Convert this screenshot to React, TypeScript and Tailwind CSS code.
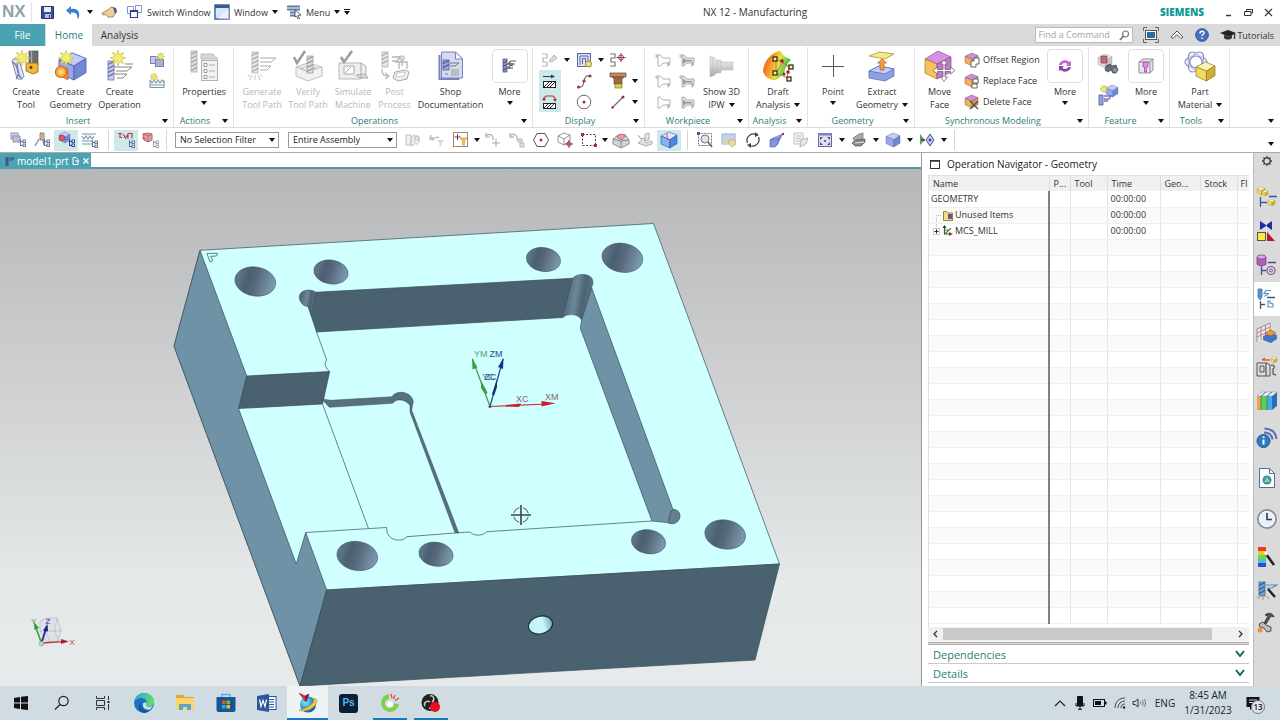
import React from "react";
import type { ReactNode } from "react";

/* ---------- drawing helpers ---------- */

function S({ w, h, children }: { w: number; h: number; children: ReactNode }) {
  return (
    <svg width={w} height={h} viewBox={`0 0 ${w} ${h}`} fill="none" aria-hidden="true" className="shrink-0">
      {children}
    </svg>
  );
}

function Caret() {
  return (
    <S w={6} h={4}>
      <path d="M0 0h6L3 4z" fill="#111" />
    </S>
  );
}

function Star({ x, y, r }: { x: number; y: number; r: number }) {
  const pts: string[] = [];
  for (let i = 0; i < 16; i++) {
    const a = (Math.PI * i) / 8 - Math.PI / 2;
    const q = i % 2 === 0 ? r : r * 0.48;
    pts.push(`${(x + q * Math.cos(a)).toFixed(2)},${(y + q * Math.sin(a)).toFixed(2)}`);
  }
  return <polygon points={pts.join(" ")} fill="#f3ef6c" stroke="#c4b95a" strokeWidth="0.6" />;
}

function Cube({ x, y, s, top, left, right, line }: { x: number; y: number; s: number; top: string; left: string; right: string; line: string }) {
  return (
    <g transform={`translate(${x} ${y}) scale(${s / 10})`} stroke={line} strokeWidth="0.35" strokeLinejoin="round">
      <path d="M0 2.5 5 0l5 2-4.500 2.800z" fill={top} />
      <path d="M0 2.500 5.500 4.800V10L0 7.500z" fill={left} />
      <path d="M5.500 4.800 10 2v5.300L5.500 10z" fill={right} />
    </g>
  );
}
const blue = { top: "#c3cdf6", left: "#98a8ea", right: "#7387d6", line: "#5b69b0" };
const gold = { top: "#fbf3b0", left: "#f0d95e", right: "#d1ad35", line: "#8d7526" };
const face = { top: "#cf8ddb", left: "#f3b04c", right: "#e2993a", line: "#7d4c7e" };
const grey = { top: "#f2f2f2", left: "#dcdcdc", right: "#c6c6c6", line: "#a5a5a5" };

function Mill({ x, y, h, c, d }: { x: number; y: number; h: number; c: string; d: string }) {
  const n = Math.floor(h / 4);
  return (
    <g>
      <rect x={x} y={y} width="6" height={h} fill={c} stroke={d} strokeWidth="0.7" />
      {Array.from({ length: n }, (_, i) => (
        <path key={i} d={`M${x} ${y + i * 4 + 3.500}l6-3`} stroke={d} strokeWidth="1.300" />
      ))}
    </g>
  );
}

function Tree({ x, y, c = "#5a6694" }: { x: number; y: number; c?: string }) {
  return (
    <g stroke={c} strokeWidth="0.900" fill="#fff">
      <path d={`M${x + 0.500} ${y}v7M${x} ${y + 2.500}h3M${x} ${y + 6.500}h3`} />
      <rect x={x + 3} y={y + 1} width="2.500" height="2.500" />
      <rect x={x + 3} y={y + 5} width="2.500" height="2.500" />
    </g>
  );
}

/* ---------- big ribbon icons ---------- */

const CreateToolIcon = () => (
  <S w={30} h={32}>
    <rect x="18" y="1" width="9" height="14" fill="#6d6d6d" stroke="#444" strokeWidth="0.600" />
    <path d="M20.500 1v13" stroke="#aaa" strokeWidth="1.500" />
    <path d="M15 13h12v9l-5 2-7-3z" fill="#efb734" stroke="#8b6416" strokeWidth="0.800" />
    <circle cx="20" cy="17.500" r="1.400" fill="#4c3a10" />
    <path d="M1 11c0-2 6-3 7-1l5 16c-1 4-6 4-7 2z" fill="#dfe3f3" stroke="#68719b" strokeWidth="0.800" />
    <path d="M1 12c8 3 3 11 10 17M8 11c-6 7 4 9-3 18" stroke="#7480b0" strokeWidth="1.400" />
    <Star x={11} y={8} r={8} />
  </S>
);
const CreateGeometryIcon = () => (
  <S w={32} h={32}>
    <Cube x={4} y={3} s={27} {...blue} />
    <path d="M6 16l7 3v11l-8-4z" fill="#f08a3c" stroke="#b5541e" strokeWidth="0.600" />
    <circle cx="6" cy="22" r="5.500" fill="#f9b23c" stroke="#d36a22" strokeWidth="1.200" />
    <circle cx="6" cy="22" r="2.500" fill="#fcd774" />
    <Star x={11} y={8} r={8} />
  </S>
);
const CreateOperationIcon = () => (
  <S w={30} h={32}>
    <path d="M8 17h19l-5 4H11M20 14h8M10 24h12l-4 4h-6" stroke="#777" strokeWidth="0.900" />
    <Mill x={3} y={11} h={19} c="#c9cdea" d="#5c66a0" />
    <Star x={13} y={8} r={8} />
  </S>
);
const PropertiesIcon = () => (
  <S w={30} h={32}>
    <Mill x={2} y={1} h={21} c="#ddd" d="#a5a5a5" />
    <path d="M12 4h12l5 5H12z" fill="#d8d8d8" stroke="#aaa" strokeWidth="0.700" />
    <rect x="12.500" y="10.500" width="16" height="20" fill="#f2f2f2" stroke="#b0b0b0" />
    <path d="M15 13.500h3v3h-3zM15 19.500h3v3h-3zM15 25.500h3v3h-3z" fill="#fff" stroke="#888" strokeWidth="0.800" />
    <path d="M20 15h6M20 21h6M20 27h6" stroke="#aaa" strokeWidth="1.200" />
  </S>
);
const GenerateIcon = () => (
  <S w={30} h={32}>
    <Mill x={5} y={2} h={21} c="#e8e8e8" d="#a8a8a8" />
    <path d="M13 8h16l-5 4H13M13 16h11l-4 4h-7" stroke="#aaa" strokeWidth="1" />
    <path d="M8 25v5M3 24l-2 3M13 24l2 3M5 25l-2 5M11 25l2 5" stroke="#c9c9c9" strokeWidth="1" />
  </S>
);
const VerifyIcon = () => (
  <S w={30} h={32}>
    <path d="M3 17l12-4 14 4v9l-14 5-12-5z" fill="#f1f1f1" stroke="#c0c0c0" />
    <path d="M3 17l12 5 14-5M8 18l7-2 8 2-8 3z" fill="#ddd" stroke="#b8b8b8" strokeWidth="0.700" />
    <Mill x={14} y={6} h={17} c="#ddd" d="#999" />
    <path d="M1 7l3 6L12 1" stroke="#9b9b9b" strokeWidth="2.500" />
  </S>
);
const SimulateIcon = () => (
  <S w={32} h={32}>
    <path d="M2 13h22l5 3v10l-6 3H2z" fill="#eee" stroke="#b5b5b5" />
    <path d="M7 16h10v8H7z" fill="#fff" stroke="#aaa" />
    <path d="M8 23l6-6M24 13v16M19 25l4 3h8l-3-4z" fill="#ddd" stroke="#aaa" />
    <path d="M4 7l3 5 8-11" stroke="#9b9b9b" strokeWidth="2.500" />
  </S>
);
const PostIcon = () => (
  <S w={30} h={32}>
    <Mill x={2} y={2} h={15} c="#e6e6e6" d="#a8a8a8" />
    <path d="M12 7h8l-3 4h-5M22 8v8M15 12h12v7M19 12v7" stroke="#b5b5b5" strokeWidth="1.300" />
    <path d="M20 6h4v4h-4z" fill="#ddd" stroke="#aaa" strokeWidth="0.700" />
    <path d="M15 22l10-2 4 2-2 7-9 2-5-3z" fill="#eee" stroke="#aaa" />
    <path d="M17 23l8-1-1 4-8 1z" fill="#fff" stroke="#bbb" strokeWidth="0.700" />
    <path d="M2 19c0 6 2 7 6 7m-3-3 4 3-4 3" stroke="#b3b3b3" strokeWidth="1.200" />
  </S>
);
const ShopIcon = () => (
  <S w={28} h={32}>
    <path d="M4.500 2h14l7 7v19h-21z" fill="#d5d9f4" stroke="#7a82bd" />
    <path d="M2.500 5v24h20" stroke="#7a82bd" strokeWidth="2" />
    <path d="M18.500 2v7h7z" fill="#fff" stroke="#7a82bd" />
    <Mill x={6} y={10} h={10} c="#9ea6dd" d="#4a5390" />
    <path d="M13 13h9l-4 3h-5M8 24h3" stroke="#777" />
    <path d="M14 19h8v7h-8z" fill="#bbb" />
  </S>
);
const MoreMillIcon = () => (
  <S w={18} h={16}>
    <rect x="2" y="1" width="4" height="13" fill="#8d95c9" stroke="#3e4781" strokeWidth="0.700" />
    <path d="M2 5l4-2M2 8.500l4-2M2 12l4-2" stroke="#3e4781" />
    <path d="M15 3h-5L7 6h5M12 7.500h-3L7 10h3" stroke="#555" strokeWidth="1.100" />
    <path d="M7 6h7M7 10h5" stroke="#555" strokeWidth="1.100" />
  </S>
);
const ShowIpwIcon = () => (
  <S w={28} h={24}>
    <defs>
      <linearGradient id="ipw" x1="0" y1="0" x2="0" y2="1">
        <stop offset="0" stopColor="#e9e9e9" />
        <stop offset="0.400" stopColor="#dadada" />
        <stop offset="1" stopColor="#a5a5a5" />
      </linearGradient>
    </defs>
    <path d="M2 2c3 1 5 2 6 4h5v2h12v8H13v3H9c-2 2-4 3-7 4z" fill="url(#ipw)" stroke="#c0c0c0" strokeWidth="0.600" />
    <path d="M5 3v18M9 6v13M13 7v11" stroke="#bbb" strokeWidth="0.600" />
  </S>
);
const DraftIcon = () => (
  <S w={32} h={32}>
    <defs>
      <linearGradient id="drf" x1="0" y1="0.300" x2="1" y2="0.600">
        <stop offset="0" stopColor="#f0501f" />
        <stop offset="0.300" stopColor="#f79a28" />
        <stop offset="0.550" stopColor="#e6e33a" />
        <stop offset="0.850" stopColor="#43cc4c" />
      </linearGradient>
    </defs>
    <path d="M1 20C3 10 9 3 17 1c3 0 3 3 5 5 2 2 5 2 7 4-4 3-5 7-7 13-4 4-7 8-11 7C5 29 1 24 1 20z" fill="url(#drf)" />
    <path d="M14 9l6 3 10 6M14 9v14l12 5M14 23l7-11M20 12l7 6-2 10" stroke="#cf6b6b" strokeWidth="1" />
    <g fill="#fff27a" stroke="#222" strokeWidth="1.200">
      <rect x="11" y="7" width="4" height="4" />
      <rect x="11" y="21" width="4" height="4" />
      <rect x="27" y="15" width="4" height="4" />
      <rect x="25" y="27" width="4" height="4" />
    </g>
    <g fill="#a02020">
      <circle cx="20" cy="11" r="1.800" />
      <circle cx="26" cy="22" r="1.800" />
      <circle cx="22" cy="24" r="1.600" />
    </g>
  </S>
);
const PointIcon = () => (
  <S w={24} h={24}>
    <path d="M12.500 1v22M1 12.500h22" stroke="#555" strokeWidth="1" />
  </S>
);
const ExtractIcon = () => (
  <S w={28} h={32}>
    <path d="M1 6 11 2l15 2-9 5z" fill="#f6e88a" stroke="#b5a84e" />
    <path d="M1 21l10-5 15 3v7l-9 5-16-3z" fill="#8f9fe8" stroke="#5563ad" strokeWidth="0.700" />
    <path d="M1 21l10-5 15 3-9 5z" fill="#c2cdf8" stroke="#5563ad" strokeWidth="0.700" />
    <path d="M12 20v-7H9.500L14 9l4.500 4H16v7z" fill="#f39a45" stroke="#b35f1a" strokeWidth="0.700" />
  </S>
);
const MoveFaceIcon = () => (
  <S w={32} h={32}>
    <path d="M1 9 14 1l13 6-14 7z" fill="#d793e2" stroke="#8b4a97" strokeWidth="0.700" />
    <path d="M1 9l12 5v15L1 23z" fill="#f7c257" stroke="#a9722b" strokeWidth="0.700" />
    <path d="M13 14l14-7v15l-14 7z" fill="#c079cf" stroke="#8b4a97" strokeWidth="0.700" />
    <path d="M20 10l3.500 4H21v5.500h5.500V17l4.500 3.500-4.500 3.500v-2.500H21V27h2.500L20 31.500 16.500 27H19v-5.500h-5.500V24L9 20.500l4.500-3.500v2.500H19V14h-2.500z" fill="#fff" stroke="#666" strokeWidth="0.800" />
  </S>
);
const SyncMoreIcon = () => (
  <S w={16} h={16}>
    <path d="M2 7c1-5 8-6 10-3l2-1v5H9l1.500-1.500C9 4 5 5 5 7z" fill="#c069cf" />
    <path d="M14 9c-1 5-8 6-10 3l-2 1V8h5L5.500 9.500C7 12 11 11 11 9z" fill="#9441a6" />
  </S>
);
const FeatureMoreIcon = () => (
  <S w={18} h={18}>
    <path d="M2 5l4-3h10v11l-3 3H2z" fill="#e8e8e8" stroke="#777" strokeWidth="0.800" />
    <path d="M2 5h11v11M13 5l3-3" stroke="#777" strokeWidth="0.800" />
    <path d="M6 5h5v5H9.500v5h-2v-5H6z" fill="#e58be8" stroke="#9d3ea3" strokeWidth="0.700" />
  </S>
);
const MaterialIcon = () => (
  <S w={32} h={32}>
    <g stroke="#8a95c6" strokeWidth="1.100" fill="#e9ecf8">
      <ellipse cx="12" cy="12" rx="11" ry="6" />
      <ellipse cx="12" cy="12" rx="11" ry="6" transform="rotate(60 12 12)" fillOpacity="0.500" />
      <ellipse cx="12" cy="12" rx="11" ry="6" transform="rotate(120 12 12)" fillOpacity="0.500" />
      <circle cx="12" cy="12" r="6" fill="#fff" />
    </g>
    <Cube x={12} y={12} s={19} {...gold} />
  </S>
);

/* ---------- small ribbon icons ---------- */

const NewProgramIcon = () => (
  <S w={16} h={16}>
    <rect x="1.500" y="4.500" width="8" height="7" fill="#c4c8e2" stroke="#7880ab" />
    <rect x="6.500" y="7.500" width="8" height="7" fill="#aab0d6" stroke="#7880ab" />
    <Star x={11.500} y={4.500} r={4} />
  </S>
);
const NewMethodIcon = () => (
  <S w={16} h={16}>
    <path d="M1 7l2 3 2-3 2 3 2-3 2 3 2-3 2 3M1 14.500h14M1 12h14" stroke="#7894a8" strokeWidth="1.100" />
    <path d="M1 7v8M15 7v8" stroke="#7894a8" />
    <Star x={5} y={4} r={4} />
  </S>
);
const PathGreyIcon = () => (
  <S w={18} h={16}>
    <path d="M1 2h5v4H2v4h4v4H1" stroke="#b5b5b5" strokeWidth="1.200" />
    <path d="M8 9l5-6 3 3-5 4z" fill="#d9d9d9" stroke="#b5b5b5" />
  </S>
);
const DisplayGridIcon = () => (
  <S w={17} h={16}>
    <rect x="1.500" y="1.500" width="13" height="13" fill="#dfe2f5" stroke="#5d66a8" />
    <path d="M4 13V4h8v8M6.500 12V6.500H9.500V10" stroke="#5d66a8" />
    <circle cx="12.500" cy="12" r="3" fill="#f3e27a" stroke="#9a8a30" />
  </S>
);
const PathPointIcon = () => (
  <S w={18} h={16}>
    <path d="M1 2h5v4H2v4h4v4H1" stroke="#777" strokeWidth="1.200" />
    <circle cx="12" cy="5.500" r="2.500" stroke="#9d3b4a" />
    <path d="M12 1v9M7.500 5.500h9" stroke="#9d3b4a" />
  </S>
);
const HatchArrowIcon = () => (
  <S w={16} h={16}>
    <path d="M1 3.500h10" stroke="#27436e" strokeWidth="1.100" />
    <path d="M9 1.500l4 2-4 2z" fill="#27436e" />
    <rect x="1.500" y="8.500" width="12" height="6" fill="#fff" stroke="#222" />
    <path d="M2 14l5-5M5 14l5-5M8 14l5-5" stroke="#222" strokeWidth="1" />
  </S>
);
const HatchLoopIcon = () => (
  <S w={16} h={16}>
    <path d="M2 7V4l2-2h7l2 2v3" stroke="#b03a3a" strokeWidth="1.100" />
    <path d="M0 6h4L2 3zM11 5h4l-2 3z" fill="#b03a3a" />
    <rect x="1.500" y="9.500" width="12" height="5" fill="#fff" stroke="#222" />
    <path d="M2 14l4-4M5 14l4-4M8 14l4-4" stroke="#222" strokeWidth="1" />
  </S>
);
const SplineIcon = () => (
  <S w={16} h={16}>
    <path d="M2 14c6 1 5-3 6-6s1-6 6-5" stroke="#666" strokeWidth="1.100" />
    <circle cx="2.500" cy="14" r="1.600" fill="#a0323c" />
    <circle cx="8" cy="8" r="1.600" fill="#a0323c" />
    <circle cx="14" cy="3" r="1.600" fill="#a0323c" />
  </S>
);
const HolderIcon = () => (
  <S w={18} h={17}>
    <path d="M1 1h16v4H1z" fill="#c08a62" stroke="#6e4528" strokeWidth="0.700" />
    <path d="M3 5h12l-2 2v5H5V7z" fill="#9a6a48" stroke="#6e4528" strokeWidth="0.700" />
    <path d="M6 12h7v4H6z" fill="#d9d44c" stroke="#7f7b20" strokeWidth="0.700" />
  </S>
);
const CirclePointIcon = () => (
  <S w={16} h={16}>
    <circle cx="8" cy="8" r="6.800" stroke="#666" strokeWidth="1" />
    <circle cx="8" cy="8" r="1.500" fill="#a0323c" />
  </S>
);
const LineIcon = () => (
  <S w={16} h={16}>
    <path d="M2 14 13 3" stroke="#666" strokeWidth="1.100" />
    <circle cx="13" cy="3" r="1.500" fill="#a0323c" />
    <circle cx="2.500" cy="13.500" r="1.200" fill="#a0323c" />
  </S>
);
function IpwSmall({ fill, star }: { fill: string; star: boolean }) {
  return (
    <S w={18} h={16}>
      {star && <path d="M1 4h4M3 2v4" stroke="#aaa" strokeWidth="0.900" />}
      <path d="M4 3h2l3 3h7v5H9l-3 3H4z" fill={fill} stroke="#b0b0b0" />
      {fill !== "#fff" && <path d="M5 6l3 2h6v1.500H8L5 12z" fill="#9a9a9a" />}
      <path d="M13.500 10v5l3-3z" fill="#aaa" />
    </S>
  );
}
function FaceIcon({ kind }: { kind: "offset" | "replace" | "delete" }) {
  return (
    <S w={16} h={16}>
      <Cube x={1} y={1} s={13} {...face} />
      {kind === "offset" && <path d="M7 9h3V6h5v6h-3v3H7z" fill="#fff" stroke="#666" />}
      {kind === "replace" && <path d="M9 6h5v4H9zM8 15v-4h5v4z" fill="#fff" stroke="#666" />}
      {kind === "delete" && <path d="M6 7l8 8M14 7l-8 8" stroke="#555" strokeWidth="1.400" />}
    </S>
  );
}
const FindFeatureIcon = () => (
  <S w={22} h={22}>
    <Cube x={1} y={1} s={14} {...grey} />
    <path d="M4 3h6v7H4z" fill="#c76a72" stroke="#7d3a40" strokeWidth="0.700" />
    <path d="M9 13l4-2 2 2 4-1 2 5-2 3h-3l-2-3-3 2-3-2z" fill="#666b78" stroke="#444" strokeWidth="0.700" />
    <circle cx="18" cy="17" r="2" fill="#7d8fc9" />
  </S>
);
const TeachIcon = () => (
  <S w={22} h={22}>
    <Cube x={9} y={1} s={12} {...blue} />
    <Star x={7} y={5} r={4} />
    <path d="M2 11h4v10H2z" fill="#9ba4d3" stroke="#5563ad" strokeWidth="0.900" />
    <path d="M7 12h7l-2 3H7M7 17h4" stroke="#6a76b5" strokeWidth="1.300" />
  </S>
);

/* ---------- selection bar icons ---------- */

function Sel({ children }: { children: ReactNode }) {
  return <S w={18} h={18}>{children}</S>;
}
const ProgramView = () => <Sel><rect x="2" y="2" width="7" height="6" fill="#ccd0e4" stroke="#8f95b2" /><rect x="4" y="5" width="7" height="6" fill="#b9bed9" stroke="#8f95b2" /><Tree x={11} y={8} /></Sel>;
const ToolView = () => <Sel><path d="M7 2h4v7H7z" fill="#d9b08a" stroke="#777" strokeWidth="0.800" /><path d="M6 8l-4 7M10 9l1 5" stroke="#8089ac" strokeWidth="1.400" /><Tree x={11} y={8} /></Sel>;
const GeometryView = () => <Sel><Cube x={2} y={1} s={11} {...blue} /><circle cx="5" cy="7" r="2.800" fill="#e25a54" stroke="#933" strokeWidth="0.700" /><Tree x={12} y={8} c="#22348c" /></Sel>;
const MethodView = () => <Sel><path d="M1 3h14M1 5l2 3 2-3 2 3 2-3 2 3 2-3M1 10h10M1 13h10" stroke="#7894a8" strokeWidth="1.100" /><Tree x={11} y={9} /></Sel>;
const FeatView = () => <Sel><path d="M1 2.500h4M3 2.500v4h2M6 3l2.500 4L11 3v5M12 2.500h3v5" stroke="#b0404a" strokeWidth="1.200" /><Tree x={12} y={9} /></Sel>;
const FeatGroup = () => <Sel><path d="M2 3l4-1 5 1v6l-4 2-4-2z" fill="#e3a3a8" stroke="#b0525a" strokeWidth="0.900" /><path d="M2 3l5 2 4-2M7 5v6M1 7l4 1" stroke="#b0525a" strokeWidth="0.900" /><Tree x={12} y={9} c="#999" /></Sel>;
const GreyParts = () => <Sel><path d="M2 4h5v10H2zM7 6l4-2v9l-4 2zM12 5c5-1 4 9 0 8" stroke="#c0c0c0" fill="#f0f0f0" /><circle cx="13" cy="7" r="2" stroke="#c0c0c0" /></Sel>;
const GreyFilter = () => <Sel><path d="M2 6c4 4 7-2 9 1M3 4l-1 4 4 1" stroke="#bdbdbd" strokeWidth="1.400" /><path d="M9 9h7l-2.500 3v3h-2v-3z" fill="#d8d8d8" /></Sel>;
const FilterPoint = () => <Sel><rect x="1.500" y="1.500" width="14" height="14" fill="#fff" stroke="#a9826a" /><path d="M5.500 3v6M2.500 6h6" stroke="#6a3a3a" /><path d="M8 7h7l-2.500 3v4h-2v-4z" fill="#f3c04e" stroke="#b98a2a" strokeWidth="0.500" /></Sel>;
const GreyRotate = () => <Sel><path d="M2 5c4-4 8 0 7 4M2 2v4h4" stroke="#b0b0b0" strokeWidth="1.200" /><path d="M12 8v8M8 12h8" stroke="#a5a5a5" /></Sel>;
const GreyChain = () => <Sel><path d="M2 5c4-4 8 0 7 4M2 2v4h4" stroke="#bbb" strokeWidth="1.300" /><path d="M10 8h4v3h-4zM12 12h4v4h-4z" fill="#e2e2e2" stroke="#b5b5b5" /></Sel>;
const HexPoint = () => <Sel><path d="M5 2.500h8l3.500 6.500-3.500 6.500H5L1.500 9z" stroke="#555" strokeWidth="1" /><circle cx="9" cy="9" r="1.500" fill="#a0323c" /></Sel>;
const CubePoint = () => <Sel><path d="M2 5l6-3 6 2v6l-6 4-6-3zM2 5l6 3 6-4M8 8v6" stroke="#888" strokeWidth="0.900" /><path d="M13 9v8M9 13h8" stroke="#a0323c" /><circle cx="13" cy="13" r="2" stroke="#a0323c" /></Sel>;
const RectSelect = () => <Sel><rect x="2.500" y="3.500" width="13" height="11" stroke="#444" strokeDasharray="2 1.500" /><path d="M1 2h3v3H1zM14 13h3v3h-3z" fill="#a0323c" /></Sel>;
const FaceSolid = () => <Sel><path d="M1 8l5-4 8 1 3 4v4l-8 4-8-4z" fill="#d0d4dc" stroke="#777" strokeWidth="0.800" /><path d="M5 6l3-3 6 1-4 5z" fill="#e8a0a6" stroke="#ad5b66" strokeWidth="0.800" /><path d="M9 10v6M1 8l8 2 8-1" stroke="#777" strokeWidth="0.800" /></Sel>;
const GreySheet = () => <Sel><path d="M2 4l3 4 3-1 2 5 6-2v3l-6 2-8-3 4-3zM9 3v7l4-1V2z" fill="#e2e2e2" stroke="#b0b0b0" /></Sel>;
const ClipCube = () => <Sel><Cube x={1} y={1} s={16} top="#d7eaff" left="#7fb5f2" right="#4a86de" line="#2a4d9c" /><path d="M7 2v6l4 2" stroke="#d24a7c" /></Sel>;
const FitView = () => <Sel><rect x="2.500" y="2.500" width="13" height="12" stroke="#777" strokeDasharray="2 1" /><circle cx="9" cy="8" r="4" stroke="#777" fill="#dbe6f5" /><path d="M12 11l4 5" stroke="#666" strokeWidth="1.600" /><path d="M1 1h3v3H1z" fill="#3b5aa0" /></Sel>;
const PanImg = () => <Sel><rect x="2" y="3" width="13" height="10" fill="#c6d4ea" stroke="#9fb0c8" /><path d="M2 13l5-5 3 3 2-2 3 3v1z" fill="#dcd3a8" /><path d="M9 9h6v5l-3 2-3-3z" fill="#f2dba4" stroke="#b39a5c" strokeWidth="0.600" /></Sel>;
const RotateView = () => <Sel><path d="M3.500 12A6.500 6.500 0 0 1 12 3.500M14.500 6A6.500 6.500 0 0 1 6 14.500" stroke="#444" strokeWidth="1.300" /><path d="M11 1l4 3-4 2zM7 12l-4 2 4 3z" fill="#444" /></Sel>;
const Section = () => <Sel><path d="M2 9l8-2v6l-3 3H2z" fill="#8494e0" stroke="#5b68b0" strokeWidth="0.700" /><path d="M2 9l3-2 10-4-5 4z" fill="#b5c0f3" stroke="#5b68b0" strokeWidth="0.700" /><path d="M10 7l5-4-5 10z" fill="#6a7ed8" /><circle cx="15" cy="3" r="1.200" fill="#a0323c" /></Sel>;
const GreyList = () => <Sel><path d="M2 2h9v11H2zM4 5h5M4 7.500h5M4 10h5" stroke="#c0c0c0" fill="#f2f2f2" /><path d="M9 9l7-2-2 6-6 3z" fill="#e8e8e8" stroke="#b5b5b5" /></Sel>;
const FitWindow = () => <Sel><rect x="2.500" y="2.500" width="13" height="13" fill="#d9e2f5" stroke="#5b68b0" /><path d="M2 2h14v2.500H2z" fill="#7686c5" /><path d="M4 6h3L4 9zM14 6h-3l3 3zM4 14h3l-3-3zM14 14h-3l3-3z" fill="#a0323c" /><rect x="8" y="9" width="2" height="2" fill="#5b68b0" /></Sel>;
const Plate = () => <Sel><path d="M3 7l6-4 4-1v6l-8 3z" fill="#aaa" stroke="#666" strokeWidth="0.700" /><path d="M2 12l4-3 9-1v3l-4 4H5z" fill="#888" stroke="#555" strokeWidth="0.700" /><path d="M5 12l9-1" stroke="#eee" /></Sel>;
const ShadeCube = () => <Sel><Cube x={2} y={2} s={14} {...blue} /></Sel>;
const WcsIcon = () => <Sel><path d="M2 3l5 6-5 5z" fill="#4fa862" /><path d="M3 9h4" stroke="#a0323c" strokeWidth="1.800" /><path d="M12 3l4 6-4 6-4-6z" fill="#c3cbf3" stroke="#444f96" /><circle cx="12" cy="9" r="1.500" fill="#444f96" /></Sel>;

/* ---------- ribbon parts ---------- */

function Big({ icon, lines, w, caret, inline, disabled, boxed }: { icon: ReactNode; lines: string[]; w: string; caret?: boolean; inline?: boolean; disabled?: boolean; boxed?: boolean }) {
  return (
    <button type="button" disabled={disabled} className={`${w} flex shrink-0 flex-col items-center whitespace-nowrap ${disabled ? "text-[#b9b9b9]" : "text-[#333]"}`}>
      <span className={`flex h-[34px] items-center justify-center ${boxed ? "w-[36px] rounded-sm border border-[#ddd]" : ""}`}>{icon}</span>
      <span className="mt-[2px] flex flex-col items-center leading-[13px]">
        {lines.map((l, i) => (
          <span key={l} className="flex items-center gap-1">
            {l}
            {inline && i === lines.length - 1 && <Caret />}
          </span>
        ))}
      </span>
      {caret && <span className="flex h-[10px] items-center"><Caret /></span>}
    </button>
  );
}

function Group({ name, w, children }: { name: string; w: string; children: ReactNode }) {
  return (
    <section aria-label={name} className={`${w} flex shrink-0 flex-col border-r border-[#e3e3e3] pt-[2px]`}>
      <div className="flex h-[66px]">{children}</div>
      <footer className="flex h-[13px] items-center text-[#2b7d79]">
        <span className="flex-1 whitespace-nowrap text-center">{name}</span>
        <button type="button" aria-label={`${name} options`} className="flex w-[17px] justify-center"><Caret /></button>
      </footer>
    </section>
  );
}

function Tiny({ icon, label, caret, active }: { icon: ReactNode; label: string; caret?: boolean; active?: boolean }) {
  return (
    <button type="button" aria-label={label} className="flex h-[21px] items-center">
      <span className={`flex h-full w-[22px] items-center justify-center ${active ? "bg-[#cfe9eb]" : ""}`}>{icon}</span>
      <span className="flex w-3 justify-center">{caret && <Caret />}</span>
    </button>
  );
}

function SelBtn({ icon, label, active }: { icon: ReactNode; label: string; active?: boolean }) {
  return (
    <button type="button" aria-label={label} className={`flex h-[21px] w-6 shrink-0 items-center justify-center ${active ? "bg-[#cfe9eb]" : ""}`}>{icon}</button>
  );
}
function Sep({ w = "w-3" }: { w?: string }) {
  return <span className={`${w} flex h-5 shrink-0 justify-center`}><span className="w-px bg-[#d5d5d5]" /></span>;
}
function Drop({ label, w }: { label: string; w: string }) {
  return <button type="button" aria-label={label} className={`${w} flex shrink-0 justify-center`}><Caret /></button>;
}
function Pick({ label, value, options, w }: { label: string; value: string; options: string[]; w: string }) {
  return (
    <label className={`${w} relative flex h-4 shrink-0 items-center`}>
      <span className="sr-only">{label}</span>
      <select defaultValue={value} className="h-4 w-full appearance-none border border-[#999] bg-white py-0 pl-1 pr-3 text-[9px] leading-[14px] text-[#222] outline-none">
        {options.map((o) => <option key={o}>{o}</option>)}
      </select>
      <span className="pointer-events-none absolute right-1"><Caret /></span>
    </label>
  );
}

/* ---------- title and tabs ---------- */

function TitleBar() {
  return (
    <header className="flex h-6 items-center bg-white text-[#333]">
      <span className="w-[31px] pl-[2px] font-['Liberation_Sans',sans-serif] text-[17px] font-bold leading-6 text-[#8fa3a9]">NX</span>
      <span className="h-5 w-px bg-[#e3e3e3]" />
      <button type="button" aria-label="Save" className="flex w-[30px] justify-center">
        <S w={13} h={13}><path d="M0.500 0.500h12v12h-12z" fill="#3d4c8f" stroke="#27346d" /><path d="M3 1h7v5H3z" fill="#e9ecf6" /><path d="M4 8h6v4H4z" fill="#b7bfdd" /><path d="M8 9h1v3H8z" fill="#27346d" /></S>
      </button>
      <button type="button" aria-label="Undo" className="flex w-[22px] justify-center">
        <S w={14} h={14}><path d="M0 5.500 5 1v3c6-1 9 2 8 8l-2 2c1-5-1-7-6-6.500V10z" fill="#3f7ed0" /></S>
      </button>
      <Drop label="Undo list" w="w-3" />
      <button type="button" aria-label="Touch mode" className="flex w-[26px] justify-center">
        <S w={16} h={12}><path d="M1 7l6-3 3-3 3 1 2 4-3 5H7L5 8.500 2 9z" fill="#f0cf9a" stroke="#96703c" strokeWidth="0.800" /><path d="M12 1l3 1 1 4-2 2z" fill="#44548f" /></S>
      </button>
      <button type="button" className="ml-1 flex w-[88px] items-center gap-1">
        <S w={17} h={14}><path d="M1.500 1.500h6v7h-6zM9.500 0.500h6v7h-6z" fill="#fff" stroke="#8a96c5" /><path d="M4.500 5.500h7v7h-7z" fill="#fff" stroke="#2f3f8a" strokeWidth="1.200" /><path d="M4.500 6h7" stroke="#2f3f8a" strokeWidth="2" /></S>
        <span className="whitespace-nowrap">Switch Window</span>
      </button>
      <button type="button" className="flex items-center gap-1">
        <S w={16} h={16}><rect x="1" y="1" width="14" height="14" fill="#d5e6f8" stroke="#3a5a9c" strokeWidth="1.400" /><path d="M1 1h14v3H1z" fill="#3a5a9c" /><path d="M15 4v11H4z" fill="#fff" fillOpacity="0.500" /></S>
        <span>Window</span><Caret />
      </button>
      <button type="button" className="ml-2 flex items-center gap-1">
        <S w={16} h={14}><path d="M1 1.500h13M1 4.500h13M4 7.500h6M4 10.500h5" stroke="#5f7ba3" strokeWidth="2" /><path d="M9 5l6 5-3 .5 1.500 3-1.500.5-1.500-3L9 12z" fill="#fff" stroke="#222" strokeWidth="0.700" /></S>
        <span>Menu</span><Caret />
      </button>
      <button type="button" aria-label="Customize toolbar" className="ml-1"><S w={6} h={6}><path d="M0 .5h6" stroke="#111" /><path d="M0 2h6L3 6z" fill="#111" /></S></button>
      <h1 className="flex-1 whitespace-nowrap text-center text-[10px]">NX 12 - Manufacturing</h1>
      <span className="font-['Open_Sans',sans-serif] text-[10px] font-extrabold text-[#0d9a92]">SIEMENS</span>
      <div className="ml-[14px] flex">
        <button type="button" aria-label="Minimize" className="flex w-5 justify-center"><S w={9} h={9}><path d="M2 7.500h5" stroke="#333" strokeWidth="1.500" /></S></button>
        <button type="button" aria-label="Restore" className="flex w-5 justify-center"><S w={9} h={9}><path d="M2.500 3V1.500h6V5H7M.5 3.500H7v4H.5z" stroke="#333" /></S></button>
        <button type="button" aria-label="Close" className="mr-[2px] flex w-5 justify-center"><S w={9} h={9}><path d="M1 1l7 7M8 1 1 8" stroke="#333" strokeWidth="1.200" /></S></button>
      </div>
    </header>
  );
}

function TabRow() {
  return (
    <nav className="flex h-[22px] items-stretch bg-[#dadada] text-[10px] text-[#333]">
      <button type="button" className="w-[45px] bg-[#4ba3b2] text-white">File</button>
      <button type="button" className="ml-px w-[46px] bg-white pt-[1px] text-[#1c7f7c]">Home</button>
      <button type="button" className="w-[55px] pt-[1px]">Analysis</button>
      <div className="ml-auto flex items-center text-[9px]">
        <label className="flex h-4 w-[98px] items-center border border-[#bbb] bg-white px-[2px]">
          <span className="sr-only">Find a Command</span>
          <input placeholder="Find a Command" className="h-[14px] w-full min-w-0 bg-transparent p-0 leading-[14px] outline-none placeholder:text-[#a5a5a5]" />
          <S w={12} h={11}><circle cx="7.500" cy="4" r="3" stroke="#777" strokeWidth="1.200" /><path d="M5.500 6 2 10" stroke="#777" strokeWidth="1.800" /></S>
        </label>
        <button type="button" aria-label="Full screen" className="ml-[10px] flex"><S w={16} h={16}><path d="M.5 4V.5H4M12 .5h3.500V4M15.500 12v3.500H12M4 15.500H.5V12" stroke="#666" /><rect x="2.500" y="3.500" width="11" height="9" fill="#fff" stroke="#555" /><rect x="4" y="5" width="8" height="6" fill="#2c6aa6" /></S></button>
        <button type="button" aria-label="Minimize ribbon" className="ml-[11px] flex"><S w={14} h={12}><path d="M1 8l6-6 6 6-2 1.500L7 5.500 3 9.500z" fill="#fff" stroke="#555" /></S></button>
        <button type="button" aria-label="Help" className="ml-[11px] flex"><S w={14} h={14}><circle cx="7" cy="7" r="6.300" fill="#4472c4" stroke="#2c4f94" /><path d="M5 5.500c0-3 4-3 4-.5 0 1.500-2 1.500-2 3M7 9.500v1.500" stroke="#fff" strokeWidth="1.400" /></S></button>
        <button type="button" className="ml-[11px] mr-[6px] flex items-center gap-[1px]">
          <S w={16} h={12}><path d="M0 4l8-3 8 3-7 4z" fill="#222" /><path d="M4 6v3c2 2 6 2 8 0V6l-3 2z" fill="#333" /><path d="M14.500 4v6" stroke="#333a80" strokeWidth="1.500" /></S>
          <span>Tutorials</span>
        </button>
      </div>
    </nav>
  );
}

function Ribbon() {
  return (
    <div className="flex h-[82px] border-b border-[#dcdcdc] bg-white pt-px">
      <Group name="Insert" w="w-[174px]">
        <span className="w-[5px]" />
        <Big w="w-[42px]" icon={<CreateToolIcon />} lines={["Create", "Tool"]} />
        <Big w="w-[47px]" icon={<CreateGeometryIcon />} lines={["Create", "Geometry"]} />
        <Big w="w-[51px]" icon={<CreateOperationIcon />} lines={["Create", "Operation"]} />
        <div className="flex w-[23px] flex-col">
          <button type="button" aria-label="Create Program" className="flex h-[21px] items-center justify-center"><NewProgramIcon /></button>
          <button type="button" aria-label="Create Method" className="flex h-[21px] items-center justify-center"><NewMethodIcon /></button>
        </div>
      </Group>
      <Group name="Actions" w="w-[60px]">
        <Big w="w-[60px]" icon={<PropertiesIcon />} lines={["Properties"]} caret />
      </Group>
      <Group name="Operations" w="w-[299px]">
        <span className="w-[5px]" />
        <Big w="w-[46px]" icon={<GenerateIcon />} lines={["Generate", "Tool Path"]} disabled />
        <Big w="w-[46px]" icon={<VerifyIcon />} lines={["Verify", "Tool Path"]} disabled />
        <Big w="w-[44px]" icon={<SimulateIcon />} lines={["Simulate", "Machine"]} disabled />
        <Big w="w-[39px]" icon={<PostIcon />} lines={["Post", "Process"]} disabled />
        <Big w="w-[73px]" icon={<ShopIcon />} lines={["Shop", "Documentation"]} />
        <Big w="w-[45px]" icon={<MoreMillIcon />} lines={["More"]} caret boxed />
      </Group>
      <Group name="Display" w="w-[112px]">
        <div className="ml-[6px] grid grid-cols-3 content-start">
          <Tiny label="Display options" icon={<PathGreyIcon />} caret />
          <Tiny label="Show grid" icon={<DisplayGridIcon />} caret />
          <Tiny label="Show path points" icon={<PathPointIcon />} />
          <Tiny label="Show feed moves" icon={<HatchArrowIcon />} active />
          <Tiny label="Spline" icon={<SplineIcon />} />
          <Tiny label="Tool holder" icon={<HolderIcon />} caret />
          <Tiny label="Show non-cutting moves" icon={<HatchLoopIcon />} active />
          <Tiny label="Circle centre" icon={<CirclePointIcon />} />
          <Tiny label="Line" icon={<LineIcon />} caret />
        </div>
      </Group>
      <Group name="Workpiece" w="w-[104px]">
        <div className="ml-[6px] grid w-12 grid-cols-2 content-start">
          {[0, 1, 2].map((r) => (
            <React.Fragment key={r}>
              <button type="button" aria-label={`Blank view ${r + 1}`} className="flex h-[21px] items-center justify-center"><IpwSmall fill="#fff" star={r < 2} /></button>
              <button type="button" aria-label={`Part view ${r + 1}`} className="flex h-[21px] items-center justify-center"><IpwSmall fill="#ddd" star={r < 2} /></button>
            </React.Fragment>
          ))}
        </div>
        <Big w="w-[45px]" icon={<ShowIpwIcon />} lines={["Show 3D", "IPW"]} inline />
      </Group>
      <Group name="Analysis" w="w-[59px]">
        <Big w="w-[58px]" icon={<DraftIcon />} lines={["Draft", "Analysis"]} inline />
      </Group>
      <Group name="Geometry" w="w-[107px]">
        <Big w="w-[50px]" icon={<PointIcon />} lines={["Point"]} caret />
        <Big w="w-[48px]" icon={<ExtractIcon />} lines={["Extract", "Geometry"]} inline />
      </Group>
      <Group name="Synchronous Modeling" w="w-[174px]">
        <Big w="w-[49px]" icon={<MoveFaceIcon />} lines={["Move", "Face"]} />
        <div className="flex w-[78px] flex-col whitespace-nowrap text-[#333]">
          <button type="button" className="flex h-[21px] items-center gap-[3px]"><FaceIcon kind="offset" />Offset Region</button>
          <button type="button" className="flex h-[21px] items-center gap-[3px]"><FaceIcon kind="replace" />Replace Face</button>
          <button type="button" className="flex h-[21px] items-center gap-[3px]"><FaceIcon kind="delete" />Delete Face</button>
        </div>
        <Big w="w-[46px]" icon={<SyncMoreIcon />} lines={["More"]} caret boxed />
      </Group>
      <Group name="Feature" w="w-[81px]">
        <div className="flex w-[38px] flex-col items-center gap-[9px] pt-1">
          <button type="button" aria-label="Find feature"><FindFeatureIcon /></button>
          <button type="button" aria-label="Teach feature"><TeachIcon /></button>
        </div>
        <Big w="w-[38px]" icon={<FeatureMoreIcon />} lines={["More"]} caret boxed />
      </Group>
      <Group name="Tools" w="w-[60px]">
        <Big w="w-[60px]" icon={<MaterialIcon />} lines={["Part", "Material"]} inline />
      </Group>
      <div className="flex flex-1 items-end justify-end pb-1 pr-[5px]">
        <Drop label="Ribbon options" w="w-2" />
      </div>
    </div>
  );
}

function SelectionBar() {
  return (
    <div className="flex h-[25px] items-center border-b border-[#aaa] bg-white pl-[6px]">
      <SelBtn label="Program order view" icon={<ProgramView />} />
      <SelBtn label="Machine tool view" icon={<ToolView />} />
      <SelBtn label="Geometry view" icon={<GeometryView />} active />
      <SelBtn label="Method view" icon={<MethodView />} />
      <Sep />
      <SelBtn label="Feature view" icon={<FeatView />} active />
      <SelBtn label="Feature group view" icon={<FeatGroup />} />
      <Sep w="w-2" />
      <div className="ml-[5px] mr-1 flex gap-[9px]">
        <Pick label="Selection filter" value="No Selection Filter" options={["No Selection Filter", "Face", "Edge", "Body"]} w="w-[104px]" />
        <Pick label="Selection scope" value="Entire Assembly" options={["Entire Assembly", "Work Part Only"]} w="w-[109px]" />
      </div>
      <SelBtn label="Interpart link" icon={<GreyParts />} />
      <SelBtn label="Reset filter" icon={<GreyFilter />} />
      <SelBtn label="Snap filter" icon={<FilterPoint />} />
      <Drop label="Snap filter list" w="w-2" />
      <SelBtn label="Undo selection" icon={<GreyRotate />} />
      <SelBtn label="Chain selection" icon={<GreyChain />} />
      <SelBtn label="Polygon" icon={<HexPoint />} />
      <SelBtn label="Body point" icon={<CubePoint />} />
      <SelBtn label="Rectangle selection" icon={<RectSelect />} />
      <Drop label="Selection shapes" w="w-2" />
      <SelBtn label="Face selection" icon={<FaceSolid />} />
      <SelBtn label="Sheet selection" icon={<GreySheet />} />
      <SelBtn label="Shaded body" icon={<ClipCube />} active />
      <Sep />
      <SelBtn label="Fit" icon={<FitView />} />
      <SelBtn label="Pan" icon={<PanImg />} />
      <SelBtn label="Rotate" icon={<RotateView />} />
      <SelBtn label="Section" icon={<Section />} />
      <SelBtn label="Section list" icon={<GreyList />} />
      <SelBtn label="Zoom to window" icon={<FitWindow />} />
      <Drop label="Zoom options" w="w-[10px]" />
      <SelBtn label="Background" icon={<Plate />} />
      <Drop label="Background options" w="w-[10px]" />
      <SelBtn label="Rendering style" icon={<ShadeCube />} />
      <Drop label="Rendering options" w="w-[10px]" />
      <SelBtn label="Show WCS" icon={<WcsIcon />} />
      <Drop label="WCS options" w="w-[10px]" />
      <Sep w="w-[10px]" />
      <div className="ml-auto mt-2 pr-[5px]"><Drop label="Toolbar options" w="w-2" /></div>
    </div>
  );
}

/* ---------- model view ---------- */

const holes = [
  [255.300, 281.500, 20.500, 14.500],
  [331, 272, 17.200, 12],
  [543.500, 259.500, 17.200, 12],
  [622.400, 257.800, 20.500, 14.500],
  [357.300, 556, 20.500, 14.500],
  [436, 554.200, 17.200, 12],
  [648.500, 541.800, 17.200, 12],
  [725.200, 534.500, 20.500, 14.500],
];

function ModelView() {
  return (
    <svg className="block min-h-[517px] w-full flex-1" viewBox="0 169 921 517" preserveAspectRatio="xMinYMin slice" role="img" aria-label="model1.prt">
      <defs>
        <linearGradient id="bg" x1="0" y1="0" x2="0" y2="1">
          <stop offset="0" stopColor="#b5b7b8" />
          <stop offset="0.500" stopColor="#d3d5d6" />
          <stop offset="0.800" stopColor="#e5e9e9" />
          <stop offset="1" stopColor="#e6eaea" />
        </linearGradient>
        <linearGradient id="hole" x1="0" y1="0" x2="1" y2="0.100">
          <stop offset="0" stopColor="#657f90" />
          <stop offset="0.350" stopColor="#4a6070" />
          <stop offset="0.550" stopColor="#56697b" />
          <stop offset="1" stopColor="#7b99ae" />
        </linearGradient>
        <linearGradient id="cyl" x1="0" y1="0" x2="1" y2="0.250">
          <stop offset="0.150" stopColor="#4d6676" />
          <stop offset="0.500" stopColor="#6c8899" />
          <stop offset="0.750" stopColor="#4c6371" />
          <stop offset="1" stopColor="#5a7485" />
        </linearGradient>
        <linearGradient id="pin" x1="0" y1="0" x2="1" y2="0">
          <stop offset="0" stopColor="#bdf3f7" />
          <stop offset="0.600" stopColor="#c9f7fb" />
          <stop offset="1" stopColor="#7fa3b5" />
        </linearGradient>
      </defs>
      <rect x="0" y="169" width="921" height="517" fill="url(#bg)" />
      <g stroke="#3a4c55" strokeWidth="0.700" strokeLinejoin="round">
        <path d="M200 250.300 653.500 223.500 779.500 564 326.700 590 300 686 174 346z" fill="#cfffff" />
        <path d="M200 250.300 174 346 300 686 326.700 590 305.700 532.500 296.300 564 238.700 409 246.700 376z" fill="#6f92a7" />
        <path d="M326.700 590 779.500 564 755 660 300 686z" fill="#4a6270" />
        <path d="M246.700 376 329.700 371.500 322.500 404 238.700 408.500z" fill="#4a6270" />
        <path d="M315 292.300 573 278.300 562.500 317.500 316.500 332 308 306z" fill="#4a6270" />
        <path d="M299.300 297c0-7 11-9 16.500-4.700L311.500 315 308 306.500c-5 0-8.700-5-8.700-9.500z" fill="url(#cyl)" strokeWidth="0.500" />
        <path d="M572.500 278.500c4-6 21-6 20.500 4-.3 3-1 4-1.500 5.500L581.700 320c-4-6.500-14-7-18.900-2.500z" fill="url(#cyl)" strokeWidth="0.500" />
        <path d="M591.700 288 673 509.500c-4 3-3.500 8-5.500 13l-15.500-1.500L580.300 328.300l1.400-8.300z" fill="#6f92a7" />
        <path d="M673 509.500c6-.5 9 6 5.500 11-2 3-6 4-10.500 2.500 2-4 1-10 5-13.500z" fill="#657f90" />
        <path d="M321.700 399 330.700 400.300 392.300 396.700c2-6 18-7 21 4.500l-1.300 7-.3 2L458.700 532.700H455L410 412v-6.500c-4-6.500-14-7.500-17.300-2.200L329.300 407.300z" fill="#56707d" strokeWidth="0.500" />
        <path d="M316.500 332 326.700 360c-2.500 3-2.200 6 3 12M322.500 404 368.300 528" fill="none" />
        <path d="M305.700 532.500 386.700 527.500c-1 15 18 14.500 20 9.200L455 533M455 533l15-1c4 4.500 13 4 16.700-.3L652 521" fill="none" />
        <path d="M207 253.500 217.500 253.300 216.500 256 210.700 256.300 212.800 260.700 210 262z" fill="none" />
      </g>
      {holes.map(([x, y, rx, ry]) => (
        <ellipse key={x} cx={x} cy={y} rx={rx} ry={ry} transform={`rotate(9 ${x} ${y})`} fill="url(#hole)" stroke="#3a4c55" strokeWidth="0.500" />
      ))}
      <ellipse cx="540.500" cy="625" rx="12.300" ry="8.800" transform="rotate(-14 540.500 625)" fill="url(#pin)" stroke="#1f2d35" strokeWidth="1.200" />

      <g fontFamily="'Liberation Sans', Arial, sans-serif" fontSize="9">
        <path d="M490 406.500 472.500 359" stroke="#3f9a3f" strokeWidth="1.200" />
        <path d="M472 358l5.500 9.500-5 2zM481 380.500l6.500 12-2 2.500-4.500-7z" fill="#3aa040" />
        <path d="M490 406.500 503 359" stroke="#24408e" strokeWidth="1.200" />
        <path d="M503.500 358l-5.500 9 5 2zM497 379l-5 15 2 2 3-9z" fill="#14317e" />
        <path d="M490 406.500 548 404" stroke="#c2343a" strokeWidth="1.200" />
        <path d="M555.500 403.300 541.500 401v5.500zM521 403.500l-15 1.500v1.500l13 .5z" fill="#c8202c" />
        <circle cx="490" cy="406.500" r="1.500" fill="#555" />
        <text x="474" y="356.500" fill="#5d9a72">YM</text>
        <text x="489.500" y="357" fill="#2b4a86">ZM</text>
        <text x="482" y="379.500" fill="#4f8a80" fontSize="9">YC</text>
        <text x="484.500" y="379.500" fill="#2b4a86" fontSize="9">ZC</text>
        <text x="516" y="402" fill="#8a5f66">XC</text>
        <text x="545" y="400" fill="#8a5f66">XM</text>
      </g>

      <g stroke="#444" strokeWidth="1">
        <circle cx="521" cy="515" r="7.500" fill="none" strokeWidth="0.900" strokeDasharray="8 3.780" strokeDashoffset="-1.900" />
        <path d="M521 505v20M511 515h20" strokeWidth="1.600" />
      </g>

      <g fontFamily="'Liberation Sans', Arial, sans-serif" fontSize="8">
        <path d="M40 621l7-3h10l4 12-3 11-11 1-7-11zM40 631h21M47 618l-1 13 4 11M57 618l-2 12 3 11" fill="#dfe1e8" stroke="#b3b6bf" strokeWidth="0.700" />
        <path d="M41.500 643 35 625" stroke="#3f9a3f" strokeWidth="1.600" />
        <path d="M34 622l5 6-4.500 2z" fill="#2f9a35" />
        <path d="M41.500 643 46.500 627" stroke="#1a2f8a" strokeWidth="1.800" />
        <path d="M47.500 624l-4.500 6.500 5 1z" fill="#14207e" />
        <path d="M41.500 643 63 641.700" stroke="#b8343a" strokeWidth="1.300" />
        <path d="M69 641.500 61 639v5z" fill="#b8202c" />
        <circle cx="41.500" cy="643.500" r="2.300" fill="#bcd8c8" stroke="#78988a" strokeWidth="0.600" />
        <text x="31" y="624" fill="#3f9a3f">Y</text>
        <text x="45.500" y="624" fill="#24309a">Z</text>
        <text x="69.500" y="644.500" fill="#c0404a">X</text>
      </g>
    </svg>
  );
}

/* ---------- navigator ---------- */

const columns: [string, string][] = [
  ["Name", "w-[120px]"],
  ["P...", "w-[21px]"],
  ["Tool", "w-[37px]"],
  ["Time", "w-[53px]"],
  ["Geo...", "w-[40px]"],
  ["Stock", "w-[37px]"],
  ["Fl", ""],
];

const rows: { name: ReactNode; time: string }[] = [
  { name: <span className="-ml-px">GEOMETRY</span>, time: "00:00:00" },
  {
    name: (
      <span className="flex items-center gap-[2px]">
        <S w={21} h={14}>
          <path d="M4.500 14V7.500H10" stroke="#bbb" strokeDasharray="1 1" />
          <path d="M11.500 3.500h3l1 1.500h5v7.500h-9z" fill="#f3e08a" stroke="#9a8430" />
          <path d="M16 6h4v5h-4z" fill="#6a4f9a" />
        </S>
        Unused Items
      </span>
    ),
    time: "00:00:00",
  },
  {
    name: (
      <span className="flex items-center gap-[2px]">
        <S w={21} h={14}>
          <path d="M4.500 0v4" stroke="#bbb" strokeDasharray="1 1" />
          <rect x="1.500" y="4.500" width="6" height="6" fill="#fff" stroke="#ccc" />
          <path d="M2.500 7.500h4M4.500 5.500v4" stroke="#222" />
          <path d="M12.500 3v7h6" stroke="#444" strokeWidth="1.200" />
          <path d="M13 10l6-6M12 6h5" stroke="#3c8a46" strokeWidth="1.100" />
          <path d="M10.500 4l2-3 2 3z" fill="#333" />
          <path d="M17 8l4 2-4 2z" fill="#a0323c" />
        </S>
        MCS_MILL
      </span>
    ),
    time: "00:00:00",
  },
];

function Navigator() {
  return (
    <aside className="flex w-[332px] shrink-0 flex-col border-l border-[#999] bg-white pl-[6px] pr-1">
      <div className="flex h-[22px] items-center gap-[7px] pl-[2px] text-[10px] text-[#222]">
        <S w={10} h={9}><rect x="0.500" y="0.500" width="9" height="8" stroke="#333" /><path d="M0 1h10" stroke="#333" strokeWidth="1.500" /></S>
        <h2>Operation Navigator - Geometry</h2>
      </div>
      <div className="min-h-0 flex-1 overflow-hidden border-l border-t border-[#e0e0e0]">
        <table className="w-full table-fixed border-collapse text-left text-[#333]">
          <thead>
            <tr className="h-[15px] bg-[#f0f0f0]">
              {columns.map(([name, w]) => (
                <th key={name} scope="col" className={`${w} overflow-hidden whitespace-nowrap border-r border-[#ddd] p-0 pl-1 font-normal leading-[14px] last:border-r-0 last:pl-[3px]`}>{name}</th>
              ))}
            </tr>
          </thead>
          <tbody>
            {Array.from({ length: 27 }, (_, r) => (
              <tr key={r} className="h-4 odd:bg-white even:bg-[#fafafa]">
                {columns.map(([name], c) => (
                  <td key={name} className={`h-4 overflow-hidden whitespace-nowrap border-b border-b-[#f0f0f0] p-0 pl-[3px] leading-[14px] ${c === 0 ? "border-r-2 border-r-[#808080]" : "border-r border-r-[#e6e6e6] last:border-r-0"}`}>
                    {c === 0 ? rows[r]?.name : c === 3 ? rows[r]?.time : null}
                  </td>
                ))}
              </tr>
            ))}
          </tbody>
        </table>
      </div>
      <div className="flex h-[14px] items-center bg-[#f0f0f0]">
        <button type="button" aria-label="Scroll left" className="flex w-[15px] justify-center"><S w={5} h={8}><path d="M4 1 1 4l3 3" stroke="#333" strokeWidth="1.300" /></S></button>
        <div className="flex h-3 flex-1"><span className="w-[93%] bg-[#c9c9c9]" /></div>
        <button type="button" aria-label="Scroll right" className="flex w-[17px] justify-center"><S w={5} h={8}><path d="M1 1l3 3-3 3" stroke="#333" strokeWidth="1.300" /></S></button>
      </div>
      <div className="mt-px h-[3px] border-y border-[#aaa] bg-[#ddd]" />
      {["Dependencies", "Details"].map((t) => (
        <button key={t} type="button" className="flex h-[19px] items-center justify-between border-b border-[#c9c9c9] pl-[5px] pr-1 text-[11px] text-[#2b7d79]">
          <span>{t}</span>
          <S w={10} h={8}><path d="M1 1l4 5 4-5" stroke="#11605f" strokeWidth="2" /></S>
        </button>
      ))}
      <div className="h-[3px]" />
    </aside>
  );
}

/* ---------- resource bar ---------- */

const resources: { label: string; h: string; active?: boolean; icon: ReactNode }[] = [
  { label: "Assembly Navigator", h: "h-[34px]", icon: <S w={22} h={22}><Cube x={1} y={1} s={8} {...gold} /><Cube x={6} y={4} s={6} {...gold} /><Cube x={12} y={13} s={7} {...gold} /><path d="M4.500 11v10M4 16.500h7M13 10.500h8" stroke="#444f96" strokeWidth="1.300" /></S> },
  { label: "Constraint Navigator", h: "h-[34px]", icon: <S w={22} h={22}><path d="M4 1l6 4 6-4v9l-6-4-6 4z" fill="#1b2fa0" /><path d="M10.500 0v11" stroke="#fff" strokeDasharray="1 1" /><rect x="1.500" y="12.500" width="8" height="8" fill="#f6ee3c" stroke="#555" /><path d="M11 21v-9l8 9z" fill="#b3182a" /></S> },
  { label: "Part Navigator", h: "h-[34px]", icon: <S w={22} h={22}><path d="M1 3v7c0 2 9 2 9 0V3z" fill="#b25fb8" stroke="#6f3277" strokeWidth="0.700" /><ellipse cx="5.500" cy="3" rx="4.500" ry="2" fill="#e0a7e4" stroke="#6f3277" strokeWidth="0.700" /><path d="M5.500 12v9M5 16.500h5M12 8.500h8" stroke="#444f96" strokeWidth="1.300" /><circle cx="15" cy="16.500" r="4" stroke="#8c4a8f" strokeWidth="1.200" /><circle cx="15" cy="16.500" r="1.500" stroke="#8c4a8f" /></S> },
  { label: "Operation Navigator", h: "h-[34px]", active: true, icon: <S w={22} h={22}><path d="M2 1h4v8L4 12 2 9z" fill="#5b97c6" stroke="#34668f" strokeWidth="0.700" /><path d="M15 2.500h-5l-2 3h5M13 5.500l-4 2.500H8" stroke="#5b97c6" strokeWidth="1.200" /><path d="M11 9.500h8M4.500 13v8M4 16.500h5" stroke="#33576f" strokeWidth="1.300" /><path d="M12 13v6h5v-3l-3-1v-2z" stroke="#5b97c6" strokeWidth="1.200" /></S> },
  { label: "Machining Feature Navigator", h: "h-[34px]", icon: <S w={22} h={22}><path d="M1 7 14 1v14L1 20z" fill="#fbe7c8" /><path d="M1 7 14 1v14M1 7v13M1 11l13-6M1 15l13-6M5 5v13M9.500 3v14" stroke="#9a86b5" /><path d="M7 14l7-3 7 2v4l-6 4-8-3z" fill="#3f74c9" /><path d="M9 11l6-3 5 3-6 3z" fill="#f0983c" stroke="#a85f1c" strokeWidth="0.700" /></S> },
  { label: "Machine Tool Navigator", h: "h-[34px]", icon: <S w={22} h={22}><path d="M1 7h10l3 2v11H1zM4 10v6h4v-6z" fill="#ddd" stroke="#555" /><path d="M15 9c4 0 4 3 2 4v5l3 1M10 7v13" stroke="#666" strokeWidth="1.400" /><path d="M7 4h7M9 2 6 4" stroke="#d9622c" strokeWidth="1.400" /><Cube x={15} y={1} s={6} {...gold} /></S> },
  { label: "Reuse Library", h: "h-[34px]", icon: <S w={22} h={22}><path d="M1 6h4v14H1z" fill="#f0a43c" /><path d="M5 6h6v14H5z" fill="#5fd04a" /><path d="M11 6h5v14h-5z" fill="#3fb0e0" /><path d="M16 6l5-4v14l-5 4z" fill="#2a6fb5" /><path d="M1 6l5-4h15l-5 4z" fill="#eaf4fb" stroke="#7a9db5" strokeWidth="0.600" /><path d="M5 6l5-4M11 6l5-4M5 6v14M11 6v14" stroke="#4a7a98" /></S> },
  { label: "HD3D Tools", h: "h-10", icon: <S w={22} h={22}><circle cx="7.500" cy="14" r="6.500" fill="#2f78c4" stroke="#1f5591" /><path d="M7.500 12.500v5M7.500 9.500v1.500" stroke="#fff" strokeWidth="2" /><path d="M8 5.500c5 0 8 3 8.500 7M8.500 1.500C16 2 20 6 20.500 12" stroke="#5a6fb5" strokeWidth="2" /></S> },
  { label: "Web Browser", h: "h-10", icon: <S w={18} h={22}><path d="M1.500 1.500h10l5 5v14h-15z" fill="#fff" stroke="#4a6f98" /><path d="M11.500 1.500v5h5" stroke="#4a6f98" /><circle cx="9" cy="13" r="4.500" fill="#3f8fb0" /><path d="M6 15l3-5 3 5z" fill="#8fd08a" /></S> },
  { label: "History", h: "h-[42px]", icon: <S w={22} h={22}><circle cx="11" cy="11" r="9" fill="#e9f0f7" stroke="#8a929c" strokeWidth="2" /><circle cx="11" cy="11" r="7.500" stroke="#fff" /><path d="M11 5v6.500h5" stroke="#2b3c66" strokeWidth="1.600" /></S> },
  { label: "Visualization", h: "h-[33px]", icon: <S w={22} h={22}><path d="M2 1h8v4H2z" fill="#e0401f" /><path d="M2 5h8v4H2z" fill="#f2c52c" /><path d="M2 9h8v4H2z" fill="#6fd83c" /><path d="M2 13h8v4H2z" fill="#3cc9e0" /><path d="M2 17h8v4H2z" fill="#2b4fd0" /><path d="M10 8l8 11" stroke="#222" strokeWidth="2.500" /><path d="M9 6l2 3" stroke="#fff" strokeWidth="2.500" /></S> },
  { label: "Toolpath display", h: "h-[33px]", icon: <S w={22} h={22}><Mill x={3} y={3} h={14} c="#6fa0cf" d="#35628e" /><path d="M10 6h11l-5 3h-5" stroke="#5c84b5" strokeWidth="1.200" /><path d="M12 10l7 8" stroke="#222" strokeWidth="2.500" /><path d="M1 18l3 2M7 18v3M11 17l2 3" stroke="#7fb04a" /></S> },
  { label: "Roles", h: "h-[33px]", icon: <S w={22} h={22}><path d="M9 3c3-3 8-2 9 2l-3-1-5 8-2-1 4-7z" fill="#555" stroke="#222" strokeWidth="0.700" /><path d="M3 12l4-2 3 3 5 2v4l-4 1-3-4-4-1z" fill="#bbb" stroke="#333" strokeWidth="0.800" /><circle cx="4" cy="18" r="2.500" fill="#ec8f35" /></S> },
];

function ResourceBar() {
  return (
    <nav aria-label="Resource bar" className="flex w-[27px] shrink-0 flex-col border-l border-[#bbb] bg-[#dadada]">
      <button type="button" aria-label="Options" className="flex h-[27px] items-start justify-center pt-[3px]">
        <S w={10} h={10}><circle cx="5" cy="5" r="3.200" stroke="#333" strokeWidth="1.200" /><path d="M5 0v1.500M5 8.500V10M0 5h1.500M8.500 5H10M1.500 1.500l1 1M7.500 7.500l1 1M8.500 1.500l-1 1M1.500 8.500l1-1" stroke="#333" strokeWidth="1.300" /></S>
      </button>
      {resources.map((r) => (
        <button key={r.label} type="button" aria-label={r.label} className={`${r.h} flex shrink-0 items-center justify-center ${r.active ? "bg-white" : ""}`}>{r.icon}</button>
      ))}
    </nav>
  );
}

/* ---------- taskbar ---------- */

const apps: { label: string; state?: "active" | "open"; icon: ReactNode }[] = [
  { label: "Start", icon: <S w={16} h={16}><path d="M1 3l6-1v5.500H1zM8 1.800 15 1v6.500H8zM1 8.500h6V14l-6-1zM8 8.500h7V15l-7-.8z" fill="#111" /></S> },
  { label: "Search", icon: <S w={16} h={16}><circle cx="9.500" cy="6" r="4.700" stroke="#222" strokeWidth="1.200" /><path d="M6 9.500 1 14.500" stroke="#222" strokeWidth="1.300" /></S> },
  { label: "Task view", icon: <S w={16} h={16}><path d="M1.500 1v2.500h8V1M1.500 15v-2.500h8V15M1.500 5.500h8v5h-8zM13.500 1v4M13.500 9v6" stroke="#333" /><path d="M12.500 6h2v2h-2z" fill="#222" /></S> },
  {
    label: "Edge",
    icon: (
      <S w={22} h={22}>
        <defs><linearGradient id="edge" x1="0" y1="0" x2="1" y2="0.300"><stop offset="0" stopColor="#2aa5dc" /><stop offset="1" stopColor="#5fdc6a" /></linearGradient></defs>
        <circle cx="11" cy="11" r="10" fill="#1c72c4" />
        <path d="M1 10C2 4 7 1 11 1c6 0 10 4 10 8.500 0 3-2.500 5-5.500 5-2 0-3-.8-3-1.500s1-1.200 1-3C13.500 7.500 11 6 8 6c-3 0-6 2-7 4z" fill="url(#edge)" />
        <path d="M8 10c-2 6 3 10 9 8-2 2-4 3-6 3-4-1-7-6-3-11z" fill="#124f96" />
        <path d="M13 13.500c1 2 5 1.500 7 0-1 1.800-2 3-3 4-4 1-8-2-7-6 1-1.500 3-1 3.500 0 0 1-1 1-.5 2z" fill="#e9f2f7" fillOpacity="0.850" />
      </S>
    ),
  },
  { label: "File Explorer", icon: <S w={20} h={18}><path d="M1 1h7l2 2h9v4H1z" fill="#dba73a" /><path d="M1 4h18v12H1z" fill="#fbd56a" /><path d="M4 16v-6h12v6h-4v-3H8v3z" fill="#5aa3c9" /></S> },
  { label: "Store", icon: <S w={20} h={20}><path d="M6 4V1.500h8V4" stroke="#4db4e8" strokeWidth="1.500" /><path d="M.5 4h19v13a2 2 0 0 1-2 2h-15a2 2 0 0 1-2-2z" fill="#17568f" /><path d="M6 7.500h3.500V11H6z" fill="#e5532d" /><path d="M10.500 7.500H14V11h-3.500z" fill="#7fba2a" /><path d="M6 12h3.500v3.500H6z" fill="#2fa3e6" /><path d="M10.500 12H14v3.500h-3.500z" fill="#f5b82e" /></S> },
  { label: "Word", icon: <S w={20} h={18}><rect x="9" y="2.500" width="10" height="13" fill="#fff" stroke="#2b579a" /><path d="M12 5.500h5M12 8h5M12 10.500h5M12 13h5" stroke="#2b579a" /><path d="M0 2l12-2v18L0 16z" fill="#2b579a" /><path d="M2.500 5.500 4 12.500 6 6.500l2 6 1.500-7" stroke="#fff" strokeWidth="1.200" /></S> },
  {
    label: "NX",
    state: "active",
    icon: (
      <S w={22} h={22}>
        <defs><radialGradient id="nxb" cx="0.350" cy="0.350" r="0.800"><stop offset="0" stopColor="#8fe8f7" /><stop offset="0.500" stopColor="#2a9cd0" /><stop offset="1" stopColor="#0d3c78" /></radialGradient></defs>
        <circle cx="11" cy="12.500" r="8" fill="url(#nxb)" />
        <path d="M2 18c4 3 17-1 18-9 0-2-2-3-4-2 3 3-5 10-14 11z" fill="#f3c83c" stroke="#a9822a" strokeWidth="0.500" />
        <path d="M2 1l6 3 4-2-3 8z" fill="#d92a45" stroke="#7c1526" strokeWidth="0.500" /><path d="M12 2 9 10 8 4z" fill="#7c1a34" />
      </S>
    ),
  },
  { label: "Photoshop", icon: <span className="flex h-[19px] w-[19px] items-center justify-center rounded-[3px] bg-[#0b1e33] font-['Liberation_Sans',sans-serif] text-[10px] font-bold leading-none text-[#58b4f5]">Ps</span> },
  { label: "Coc Coc", state: "open", icon: <S w={20} h={20}><path d="M9 1a9 9 0 1 0 10 10l-5-.5A4.500 4.500 0 1 1 9 6z" fill="#7ed04a" /><circle cx="10" cy="11" r="2.800" fill="#fff" /><path d="M11 1l1 4M15 2l-1.500 4M19 5l-4 2.500" stroke="#e0493a" strokeWidth="1.300" /></S> },
  { label: "Recorder", state: "open", icon: <S w={20} h={20}><circle cx="9" cy="9.500" r="8.500" fill="#222" /><path d="M9 3c4-1 5 4 2 6M4 13c-2-3 2-6 5-4M12 10c2 3 0 6-4 5" stroke="#ccc" strokeWidth="1.500" /><circle cx="14" cy="14" r="5" fill="#e8101c" /></S> },
];

function Taskbar() {
  return (
    <footer className="flex h-[34px] shrink-0 items-stretch bg-[#d0dce2] text-[#222]">
      {apps.map((a) => (
        <button key={a.label} type="button" aria-label={a.label} className={`flex w-[41px] shrink-0 flex-col items-center ${a.state === "active" ? "bg-[#edf2f5]" : ""}`}>
          <span className="flex flex-1 items-center pt-[2px]">{a.icon}</span>
          <span className={`h-[2px] ${a.state === "active" ? "w-full bg-[#1c77bd]" : a.state === "open" ? "w-[34px] bg-[#1c77bd]" : "w-0"}`} />
        </button>
      ))}
      <div className="ml-auto flex items-center">
        <button type="button" aria-label="Show hidden icons" className="flex w-5 justify-center"><S w={12} h={8}><path d="M1 7l5-5 5 5" stroke="#222" strokeWidth="1.200" /></S></button>
        <button type="button" aria-label="Microphone" className="flex w-5 justify-center"><S w={10} h={14}><rect x="2" y="0" width="6" height="10" rx="1" fill="#111" /><path d="M1 7v3h8V7M5 10v3M3 13.300h4" stroke="#111" /></S></button>
        <button type="button" aria-label="Battery" className="flex w-5 justify-center"><S w={14} h={8}><rect x="0.500" y="0.500" width="11" height="7" stroke="#111" /><path d="M2 2h6v4H2zM12 2.500h1.500v3H12z" fill="#111" /></S></button>
        <button type="button" aria-label="Network" className="flex w-5 justify-center"><S w={12} h={12}><path d="M1 11C1 5 5 1 11 1M4 11c0-4 3-7 7-7M7 11c0-2.500 1.500-4 4-4" stroke="#444" /><circle cx="10" cy="10.500" r="1.200" fill="#222" /></S></button>
        <button type="button" aria-label="Volume" className="flex w-[18px] justify-center"><S w={14} h={10}><path d="M1 3.500h2L6 1v8L3 6.500H1z" stroke="#333" /><path d="M8 3.500c1 1 1 2 0 3M10 2c1.500 2 1.500 4 0 6M12 1c2 2.500 2 5.500 0 8" stroke="#777" /></S></button>
        <span className="w-[34px] text-center text-[10px]">ENG</span>
        <div className="flex w-[52px] flex-col items-center text-[10px] leading-[15px]">
          <span>8:45 AM</span>
          <span>1/31/2023</span>
        </div>
        <button type="button" aria-label="Notifications" className="relative ml-[10px] flex h-6 w-[36px] items-center pl-[2px]">
          <S w={14} h={14}><path d="M0.500 1h13v10H7l-3 3v-3H.5z" fill="#111" /><path d="M3 4h8M3 6.500h8" stroke="#d0dce2" /></S>
          <span className="absolute left-[7px] top-[9px] flex h-[14px] w-[14px] items-center justify-center rounded-full border border-[#777] bg-[#dde5ea] text-[8px] font-semibold leading-none">13</span>
        </button>
      </div>
    </footer>
  );
}

export default function App() {
  return (
    <div className="flex min-h-screen flex-col overflow-hidden bg-white font-['Open_Sans','Noto_Sans',sans-serif] text-[9px] leading-[13px]">
      <TitleBar />
      <TabRow />
      <Ribbon />
      <SelectionBar />
      <main className="flex flex-1">
        <div className="flex min-w-0 flex-1 flex-col">
          <div className="flex h-4 border-b-2 border-[#5b93a3] bg-white">
            <div className="flex h-4 w-[91px] items-center gap-[3px] bg-[#4ba3b2] pl-1 text-white">
              <S w={10} h={11}><path d="M1.500 1h3v9h-3z" fill="#4a5390" /><path d="M5 2h5L8 4H5" stroke="#2f4c7e" /></S>
              <span className="text-[10px]">model1.prt</span>
              <S w={7} h={8}><path d="M1 .5h3l2 2v5H1zM3 4h4" stroke="#fff" /></S>
              <button type="button" aria-label="Close model1.prt" className="ml-px"><S w={6} h={6}><path d="M.5.5l5 5M5.500.5l-5 5" stroke="#fff" strokeWidth="1.400" /></S></button>
            </div>
          </div>
          <ModelView />
        </div>
        <Navigator />
        <ResourceBar />
      </main>
      <Taskbar />
    </div>
  );
}
